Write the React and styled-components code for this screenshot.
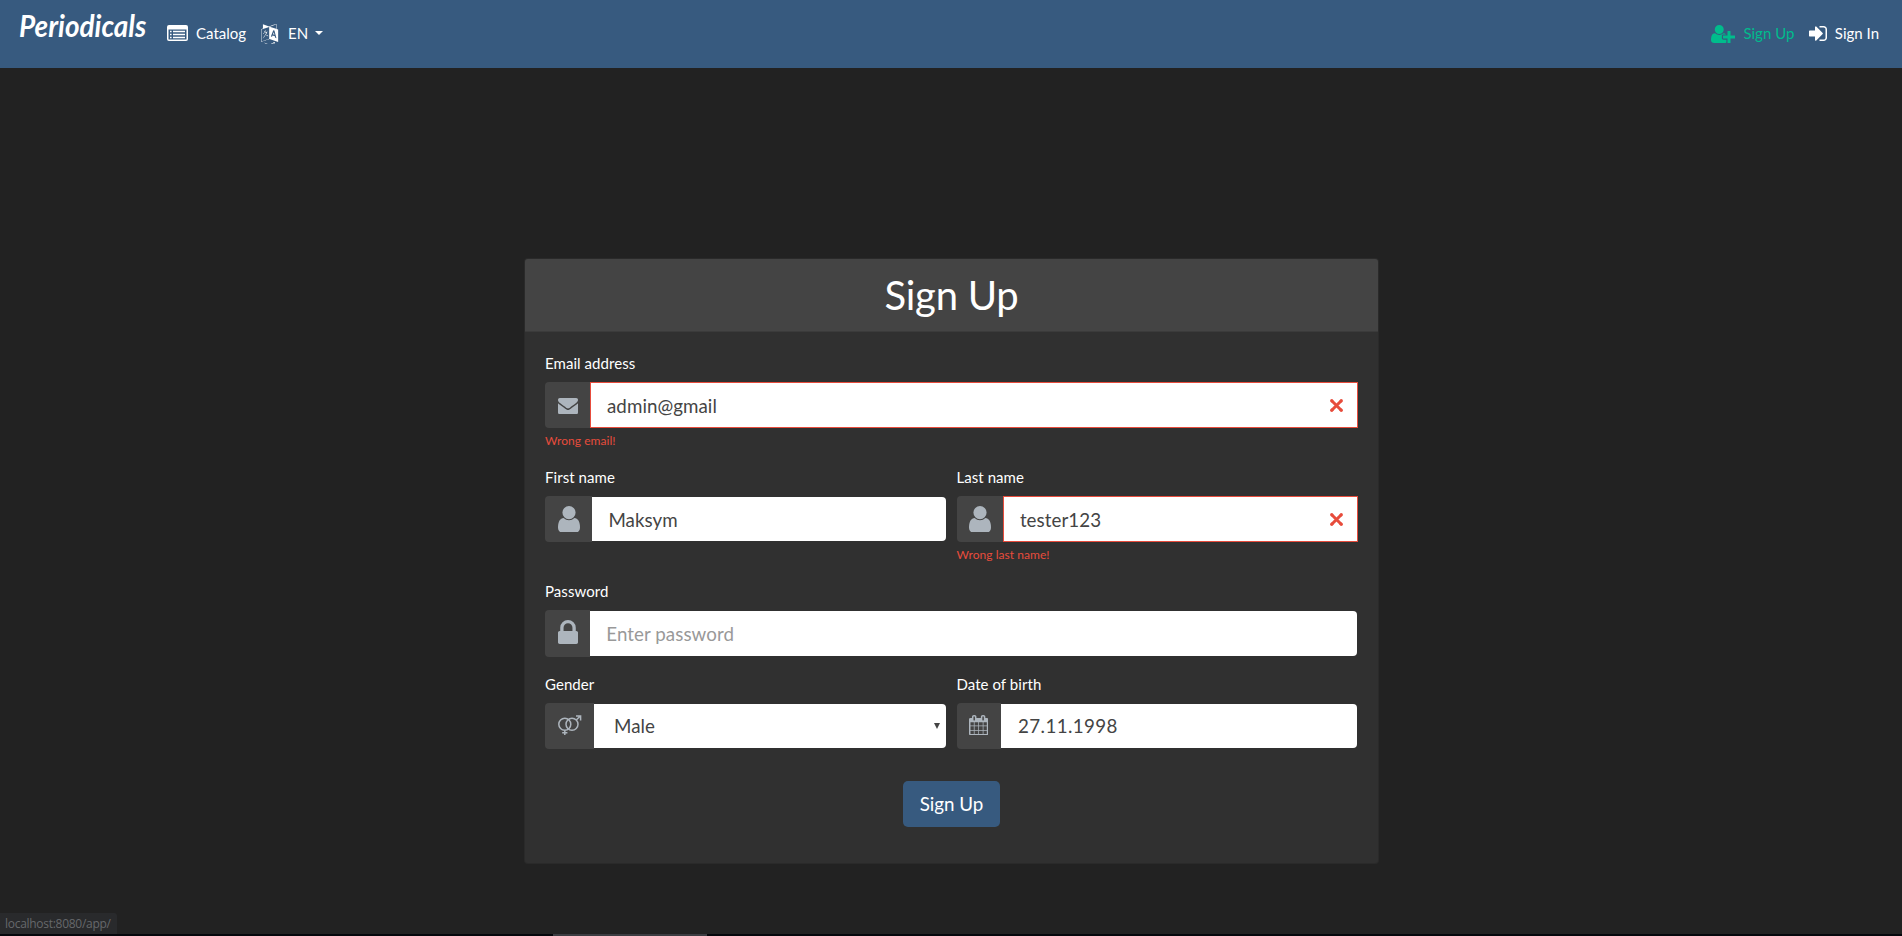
import React from 'react';
import styled, { createGlobalStyle } from 'styled-components';

const GlobalStyle = createGlobalStyle`
  *, *::before, *::after { box-sizing: border-box; }
  body {
    margin: 0;
    background: #222;
    color: #fff;
    font: 400 15px/1.5 Lato, sans-serif;
    overflow: hidden;
  }
`;

const Page = styled.div`
  display: flex;
  flex-direction: column;
  height: 936px;
`;

const Navbar = styled.nav`
  display: flex;
  align-items: center;
  height: 68px;
  flex: none;
  padding: 0 23px 0 19px;
  background: #375a7f;
`;

const Brand = styled.a`
  width: 148px;
  height: 68px;
  padding-top: 2px;
  white-space: nowrap;
  color: #fff;
`;

const BrandText = styled.span`
  display: inline-block;
  font: italic 700 30px/46px Lato, sans-serif;
  transform: scaleX(0.93);
  transform-origin: 0 50%;
`;

const NavLink = styled.a`
  display: flex;
  align-items: center;
  gap: ${(p) => p.$gap || 8}px;
  margin-right: ${(p) => p.$after || 0}px;
  color: ${(p) => (p.$active ? '#00bc8c' : '#fff')};
  white-space: nowrap;
`;

const NavText = styled.span`
  padding-bottom: 2px;
`;

const Spacer = styled.div`
  flex: 1;
`;

const Caret = styled.span`
  border: 4.5px solid transparent;
  border-top-color: #fff;
  border-bottom: 0;
  margin-top: -3px;
`;

const Svg = styled.svg`
  display: block;
  flex: none;
  fill: currentColor;
  margin-top: ${(p) => p.$shift || 0}px;
`;

const Main = styled.main`
  display: flex;
  justify-content: center;
  align-items: flex-start;
  padding: 190px 0 0 1px;
`;

const Card = styled.section`
  width: 855px;
  height: 606px;
  border: 1px solid rgba(0, 0, 0, 0.125);
  border-radius: 4px;
  background: #303030;
  background-clip: border-box;
`;

const CardHeader = styled.header`
  height: 73px;
  border-bottom: 1px solid rgba(0, 0, 0, 0.125);
  border-radius: 3px 3px 0 0;
  background: #444;
  text-align: center;
`;

const Title = styled.h1`
  margin: 0;
  padding-top: 12px;
  font: 400 40px/48px Lato, sans-serif;
  letter-spacing: -0.25px;
`;

const Form = styled.form`
  padding: 20px;
`;

const Row = styled.div`
  display: flex;
  gap: 10px;
  height: ${(p) => p.$height}px;
`;

const Field = styled.div`
  flex: 1 1 0;
  min-width: 0;
`;

const Label = styled.label`
  display: block;
  height: 22px;
  margin-bottom: 8px;
  line-height: 22.5px;
  letter-spacing: 0.06px;
`;

const InputGroup = styled.div`
  display: flex;
  height: ${(p) => p.$height || 46}px;
`;

const Addon = styled.span`
  display: flex;
  flex: none;
  width: ${(p) => p.$width}px;
  padding-left: ${(p) => p.$inset || 13}px;
  border-radius: 4px 0 0 4px;
  background: #444;
  color: #adb5bd;
`;

const Control = styled.div`
  display: flex;
  flex: 1;
  align-items: center;
  justify-content: space-between;
  margin-left: -1px;
  padding: ${(p) => p.$top || 2}px ${(p) => p.$right || 14}px 0 ${(p) => p.$left || 16}px;
  border: 1px solid ${(p) => (p.$invalid ? '#e74c3c' : 'transparent')};
  border-radius: ${(p) => (p.$invalid ? '0' : '0 5px 5px 0')};
  background: #fff;
  background-clip: padding-box;
  color: ${(p) => (p.$placeholder ? '#999' : '#444')};
  font-size: 18.75px;
  letter-spacing: ${(p) => p.$spacing || 0.05}px;
`;

const Cross = styled(Svg)`
  color: #e74c3c;
  margin-top: -2px;
`;

const Feedback = styled.div`
  margin-top: 4px;
  color: #e74c3c;
  font-size: 12px;
  line-height: 18px;
  letter-spacing: 0.05px;
`;

const Actions = styled.div`
  display: flex;
  justify-content: center;
  padding-top: 15px;
`;

const Submit = styled.button`
  width: 97px;
  height: 46px;
  padding: 0;
  border: 0;
  border-radius: 5px;
  background: #375a7f;
  color: #fff;
  font: 400 18.75px/46px Lato, sans-serif;
`;

const StatusBubble = styled.div`
  position: fixed;
  left: 0;
  bottom: 2px;
  width: 117px;
  height: 21px;
  padding-left: 5px;
  border-radius: 0 3px 0 0;
  background: #292a2c;
  color: #66686b;
  font: 12px/22px "Open Sans", sans-serif;
  letter-spacing: -0.28px;
  white-space: nowrap;
`;

const BottomEdge = styled.div`
  position: fixed;
  left: 0;
  right: 0;
  bottom: 0;
  height: 2px;
  padding-left: 553px;
  background: #05070c;
`;

const EdgeTab = styled.div`
  width: 154px;
  height: 2px;
  background: #3c3d42;
`;

const PATHS = {
  envelope: 'M1792 710v794q0 66-47 113t-113 47h-1472q-66 0-113-47t-47-113v-794q44 49 101 87 362 246 497 345 57 42 92.5 65.5t94.5 48 110 24.5h2q51 0 110-24.5t94.5-48 92.5-65.5q170-123 498-345 57-39 100-87zm0-294q0 79-49 151t-122 123q-376 261-468 325-10 7-42.5 31t-54 38.5-52 32.5-57.5 27-50 9h-2q-23 0-50-9t-57.5-27-52-32.5-54-38.5-42.5-31q-91-64-262-182.5t-205-142.5q-62-42-117-115.5t-55-136.5q0-78 41.5-130t118.5-52h1472q65 0 112.5 47t47.5 113z',
  user: 'M1536 1399q0 109-62.5 187t-150.5 78h-854q-88 0-150.5-78t-62.5-187q0-85 8.5-160.5t31.5-152 58.5-131 94-89 134.5-34.5q131 128 313 128t313-128q76 0 134.5 34.5t94 89 58.5 131 31.5 152 8.5 160.5zm-256-887q0 159-112.5 271.5t-271.5 112.5-271.5-112.5-112.5-271.5 112.5-271.5 271.5-112.5 271.5 112.5 112.5 271.5z',
  lock: 'M640 768h512v-192q0-106-75-181t-181-75-181 75-75 181v192zm832 96v576q0 40-28 68t-68 28h-960q-40 0-68-28t-28-68v-576q0-40 28-68t68-28h32v-192q0-184 132-316t316-132 316 132 132 316v192h32q40 0 68 28t28 68z',
  calendar: 'M192 1664h288v-288h-288v288zm352 0h320v-288h-320v288zm-352-352h288v-320h-288v320zm352 0h320v-320h-320v320zm-352-384h288v-288h-288v288zm736 736h320v-288h-320v288zm-384-736h320v-288h-320v288zm768 736h288v-288h-288v288zm-384-352h320v-320h-320v320zm-352-864v-288q0-13-9.5-22.5t-22.5-9.5h-64q-13 0-22.5 9.5t-9.5 22.5v288q0 13 9.5 22.5t22.5 9.5h64q13 0 22.5-9.5t9.5-22.5zm736 864h288v-320h-288v320zm-384-384h320v-288h-320v288zm384 0h288v-288h-288v288zm32-480v-288q0-13-9.5-22.5t-22.5-9.5h-64q-13 0-22.5 9.5t-9.5 22.5v288q0 13 9.5 22.5t22.5 9.5h64q13 0 22.5-9.5t9.5-22.5zm384-64v1280q0 52-38 90t-90 38h-1408q-52 0-90-38t-38-90v-1280q0-52 38-90t90-38h128v-96q0-66 47-113t113-47h64q66 0 113 47t47 113v96h384v-96q0-66 47-113t113-47h64q66 0 113 47t47 113v96h128q52 0 90 38t38 90z',
  language: 'M654 1078q-1 3-12.5-.5t-31.5-11.5l-20-9q-44-20-87-49-7-5-41-31.5t-38-28.5q-67 103-134 181-81 95-105 110-4 2-19.5 4t-18.5 0q6-4 82-92 21-24 85.5-115t78.5-118q17-30 51-98.5t36-77.5q-8-1-110 33-8 2-27.5 7.5t-34.5 9.5-17 5q-2 2-2 10.5t-1 9.5q-5 10-31 15-23 7-47 0-18-4-28-21-4-6-5-23 6-2 24.5-5t29.5-6q58-16 105-32 100-35 102-35 10-2 43-19.5t44-21.5q9-3 21.5-8t14.5-5.5 6 .5q2 12-1 33 0 2-12.5 27t-26.5 53.5-17 33.5q-25 50-77 131l64 28q12 6 74.5 32t67.5 28q4 1 10.5 25.5t4.5 30.5zm-205-486q3 15-4 28-12 23-50 38-30 12-60 12-26-3-49-26-14-15-18-41l1-3q3 3 19.5 5t26.5 0 58-16q36-12 55-14 17 0 21 17zm698 129l63 227-139-42zm-1108 800l694-232v-1032l-694 233v1031zm1241-317l102 31-181-657-100-31-216 536 102 31 45-110 211 65zm-503-962l573 184v-380zm311 1323l158 13-54 160-40-66q-130 83-276 108-58 12-91 12h-84q-79 0-199.5-39t-183.5-85q-8-7-8-16 0-8 5-13.5t13-5.5q4 0 18 7.5t30.5 16.5 20.5 11q73 37 159.5 61.5t157.5 24.5q95 0 167-14.5t157-50.5q15-7 30.5-15.5t34-19 28.5-16.5zm448-1079v1079l-774-246q-14 6-375 127.5t-368 121.5q-13 0-18-13 0-1-1-3v-1078q3-9 4-10 5-6 20-11 106-35 149-50v-384l558 198q2 0 160.5-55t316-108.5 161.5-53.5q20 0 20 21v418z',
  signIn: 'M1312 896q0 26-19 45l-544 544q-19 19-45 19t-45-19-19-45v-288h-448q-26 0-45-19t-19-45v-384q0-26 19-45t45-19h448v-288q0-26 19-45t45-19 45 19l544 544q19 19 19 45zm352-352v704q0 119-84.5 203.5t-203.5 84.5h-320q-13 0-22.5-9.5t-9.5-22.5q0-4-1-20t-.5-26.5 3-23.5 10-19.5 20.5-6.5h320q66 0 113-47t47-113v-704q0-66-47-113t-113-47h-312l-11.5-1-11.5-3-8-5.5-7-9-2-13.5q0-4-1-20t-.5-26.5 3-23.5 10-19.5 20.5-6.5h320q119 0 203.5 84.5t84.5 203.5z',
  userPlus: 'M704 896q-159 0-271.5-112.5t-112.5-271.5 112.5-271.5 271.5-112.5 271.5 112.5 112.5 271.5-112.5 271.5-271.5 112.5zm960 128h352q13 0 22.5 9.5t9.5 22.5v192q0 13-9.5 22.5t-22.5 9.5h-352v352q0 13-9.5 22.5t-22.5 9.5h-192q-13 0-22.5-9.5t-9.5-22.5v-352h-352q-13 0-22.5-9.5t-9.5-22.5v-192q0-13 9.5-22.5t22.5-9.5h352v-352q0-13 9.5-22.5t22.5-9.5h192q13 0 22.5 9.5t9.5 22.5v352zm-736 224q0 52 38 90t90 38h256v238q-68 50-171 50h-874q-121 0-194-69t-73-190q0-53 3.5-103.5t14-109 26.5-108.5 43-97.5 62-81 85.5-53.5 111.5-20q19 0 39 17 79 61 154.5 91.5t164.5 30.5 164.5-30.5 154.5-91.5q20-17 39-17 132 0 217 96h-223q-52 0-90 38t-38 90v192z',
};

function Icon({ name, box, width, height, shift }) {
  return (
    <Svg viewBox={box} width={width} height={height} $shift={shift} preserveAspectRatio="none">
      <path d={PATHS[name]} />
    </Svg>
  );
}

function ListIcon() {
  return (
    <Svg viewBox="0 0 21 16" width="21" height="16" $shift={-2}>
      <path fillRule="evenodd" d="M2 0h17a2 2 0 0 1 2 2v12a2 2 0 0 1-2 2H2a2 2 0 0 1-2-2V2a2 2 0 0 1 2-2ZM1.5 4.5v9.5q0 .6.6.6h16.8q.6 0 .6-.6V4.5Z" />
      <path d="M3 5.8h1.6v1.4H3zM6 5.8h12v1.4H6zM3 8.8h1.6v1.4H3zM6 8.8h12v1.4H6zM3 11.8h1.6v1.4H3zM6 11.8h12v1.4H6z" />
    </Svg>
  );
}

function VenusMarsIcon() {
  return (
    <Svg viewBox="0 0 24 21" width="24" height="21" $shift={12}>
      <g fill="none" stroke="currentColor" strokeWidth="1.5">
        <circle cx="6.8" cy="9.3" r="6" />
        <circle cx="14" cy="9.3" r="6" />
        <path d="M6.8 15.3V20M4.2 17.8H9.4M18.3 5l4-4M18 .9H22.6v4.6" />
      </g>
    </Svg>
  );
}

function InvalidMark() {
  return (
    <Cross viewBox="-0.55 -0.55 4.1 4.1" width="13" height="13">
      <path fill="none" stroke="currentColor" strokeWidth="0.95" d="M0 0l3 3m0-3L0 3" />
      <circle r=".52" />
      <circle cx="3" r=".52" />
      <circle cy="3" r=".52" />
      <circle cx="3" cy="3" r=".52" />
    </Cross>
  );
}

const UserIcon = () => (
  <Icon name="user" box="256 128 1280 1536" width={22} height={26.4} shift={10} />
);

export default function App() {
  return (
    <Page>
      <GlobalStyle />
      <Navbar>
        <Brand><BrandText>Periodicals</BrandText></Brand>
        <NavLink $after={15}><ListIcon /><NavText>Catalog</NavText></NavLink>
        <NavLink $gap={7}>
          <Icon name="language" box="0 0 1792 1792" width={20} height={20.5} />
          <NavText>EN</NavText>
          <Caret />
        </NavLink>
        <Spacer />
        <NavLink $active $after={15}>
          <Icon name="userPlus" box="0 128 2048 1536" width={24} height={18} />
          <NavText>Sign Up</NavText>
        </NavLink>
        <NavLink $gap={7.5}>
          <Icon name="signIn" box="128 256 1536 1280" width={18} height={15} shift={-1} />
          <NavText>Sign In</NavText>
        </NavLink>
      </Navbar>
      <Main>
        <Card>
          <CardHeader><Title>Sign Up</Title></CardHeader>
          <Form>
            <Row $height={114}>
              <Field>
                <Label>Email address</Label>
                <InputGroup>
                  <Addon $width={46}>
                    <Icon name="envelope" box="0 256 1792 1408" width={20} height={16.4} shift={15.8} />
                  </Addon>
                  <Control $invalid>admin@gmail<InvalidMark /></Control>
                </InputGroup>
                <Feedback>Wrong email!</Feedback>
              </Field>
            </Row>
            <Row $height={114}>
              <Field>
                <Label>First name</Label>
                <InputGroup>
                  <Addon $width={47.4}><UserIcon /></Addon>
                  <Control>Maksym</Control>
                </InputGroup>
              </Field>
              <Field>
                <Label>Last name</Label>
                <InputGroup>
                  <Addon $width={47.4} $inset={12.4}><UserIcon /></Addon>
                  <Control $invalid>tester123<InvalidMark /></Control>
                </InputGroup>
                <Feedback>Wrong last name!</Feedback>
              </Field>
            </Row>
            <Row $height={93}>
              <Field>
                <Label>Password</Label>
                <InputGroup $height={47}>
                  <Addon $width={45.3}>
                    <Icon name="lock" box="320 128 1152 1408" width={20} height={24} shift={10} />
                  </Addon>
                  <Control $placeholder $top={1}>Enter password</Control>
                </InputGroup>
              </Field>
            </Row>
            <Row $height={93}>
              <Field>
                <Label>Gender</Label>
                <InputGroup>
                  <Addon $width={49}><VenusMarsIcon /></Addon>
                  <Control $top={1} $left={20} $right={6}>
                    Male
                    <Svg viewBox="0 0 6 6" width="6" height="6" $shift={-1}><path d="M0 0h6L3 6z" /></Svg>
                  </Control>
                </InputGroup>
              </Field>
              <Field>
                <Label>Date of birth</Label>
                <InputGroup>
                  <Addon $width={44.5} $inset={12.4}>
                    <Icon name="calendar" box="64 0 1664 1792" width={19.3} height={20.4} shift={12} />
                  </Addon>
                  <Control $top={1} $left={17} $spacing={0.4}>27.11.1998</Control>
                </InputGroup>
              </Field>
            </Row>
            <Actions><Submit type="button">Sign Up</Submit></Actions>
          </Form>
        </Card>
      </Main>
      <StatusBubble>localhost:8080/app/</StatusBubble>
      <BottomEdge><EdgeTab /></BottomEdge>
    </Page>
  );
}
